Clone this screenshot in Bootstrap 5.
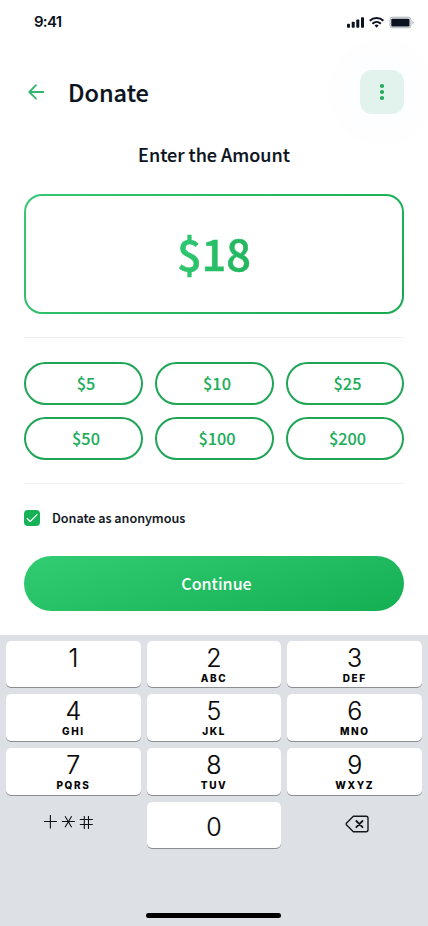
<!DOCTYPE html>
<html lang="en">
<head>
<meta charset="utf-8">
<meta name="viewport" content="width=device-width, initial-scale=1">
<title>Donate</title>
<link href="https://cdn.jsdelivr.net/npm/bootstrap@5.3.0/dist/css/bootstrap.min.css" rel="stylesheet">
<style>
body{font-family:"Noto Sans CJK SC","Noto Sans",sans-serif;color:#0b1220;background:#fff}
.screen{width:428px;height:926px}
.status{height:44px;padding:0 14px 0 34px;font:600 15px/44px Inter,sans-serif;letter-spacing:-.75px}
.topbar{height:44px;margin:26px 24px 0 25px}
.page-title{font-size:23.5px;font-weight:500;line-height:44px;margin-left:20px;-webkit-text-stroke:.2px}
.more{width:44px;height:44px;border-radius:12px;background:#e2f3ed;box-shadow:0 0 50px 12px rgba(90,108,234,.025)}
.prompt{font-size:18px;font-weight:500;line-height:30px;margin-top:25px;-webkit-text-stroke:.15px}
.amount{height:120px;margin-top:25px;border:2px solid transparent;border-radius:18px;background:linear-gradient(#fff,#fff) padding-box,linear-gradient(135deg,#38c774,#15a94f) border-box}
.amount span{font-size:43.4px;font-weight:500;line-height:60px;margin-top:-4px;background:linear-gradient(100deg,#2fc870,#21b45d);-webkit-background-clip:text;background-clip:text;color:transparent;-webkit-text-stroke:.6px transparent}
.rule{height:1px;margin-top:23px;background:#efefef}
.choices,.keys{display:grid;grid-template-columns:repeat(3,1fr)}
.choices{gap:12px;grid-template-columns:119px 119px 118px}
.pill{--bs-btn-color:#20ad5b;--bs-btn-border-color:#20a557;--bs-btn-border-width:2px;--bs-btn-padding-y:0;--bs-btn-padding-x:0;padding-left:5px;height:43px;font-size:16.3px;font-weight:500;line-height:39px;-webkit-text-stroke:.1px}
.tick{width:16px;height:16px;border-radius:4px;background:#15b257}
.anon{font-size:12.6px;font-weight:500;line-height:20px;margin-left:12px;-webkit-text-stroke:.15px}
.continue{height:55px;margin-top:28px;color:#fff;font-size:16.1px;font-weight:500;line-height:53px;padding:0 0 0 5px;border:0;background:linear-gradient(165deg,#32cd73,#14ae53)}
.pad{background:#dde0e5;padding:6px}
.keys{gap:7px 6px;grid-template-rows:46px 47px 47px 46px;font-family:Inter,sans-serif;color:#050505}
.keycap{background:#fff;border-radius:5px;box-shadow:0 1px 0 #8b8d91}
.lettered{padding-top:3px}
.digit{font-size:25px;line-height:28px;font-weight:300;-webkit-text-stroke:.2px}
.letters{font-size:10px;line-height:12px;font-weight:800;letter-spacing:1.6px;margin-right:-.2px}
.home{width:135px;height:5px;margin:auto auto 2px 140px}
svg{display:block}
</style>
<script src="https://cdn.jsdelivr.net/npm/bootstrap@5.3.0/dist/js/bootstrap.bundle.min.js"></script>
</head>
<body>
<div class="screen d-flex flex-column overflow-hidden">
  <div class="status d-flex justify-content-between align-items-center">
    <span>9:41</span>
    <svg width="68" height="14" viewBox="346 15.5 68 14">
      <g fill="#0b1220"><rect x="347" y="24.2" width="3" height="4" rx=".8"/><rect x="351.7" y="22.3" width="3" height="5.9" rx=".8"/><rect x="356.3" y="20" width="3" height="8.2" rx=".8"/><rect x="361" y="17.8" width="3" height="10.4" rx=".8"/><path d="M376.6 28.2l2-2.2a3 3 0 0 0-4 0z"/></g>
      <g fill="none" stroke="#0b1220" stroke-width="2"><path d="M369.8 21.2a9.8 9.8 0 0 1 13.6 0M372.4 24.2a6.2 6.2 0 0 1 8.4 0"/></g>
      <rect x="390" y="17.7" width="21" height="10.6" rx="2.6" fill="#e7e8eb" stroke="#b3b6bb"/><rect x="391.3" y="19.3" width="18.2" height="7.6" rx="1" fill="#0b1220"/><path d="M412.3 21.2v3.8q1.3-.5 1.3-1.9t-1.3-1.9z" fill="#b3b6bb"/>
    </svg>
  </div>
  <header class="topbar d-flex align-items-center flex-shrink-0">
    <svg width="23" height="24" viewBox="25 80 23 24" fill="none" stroke="#32b56e" stroke-width="1.8" stroke-linecap="round" stroke-linejoin="round"><path d="M43.3 92H29.4M36 85.2L29.3 92l6.7 6.6"/></svg>
    <h1 class="page-title mb-0">Donate</h1>
    <div class="more ms-auto d-flex align-items-center justify-content-center">
      <svg width="6" height="18" fill="#20aa5a"><circle cx="3" cy="3" r="2.1"/><circle cx="3" cy="9" r="2.1"/><circle cx="3" cy="15" r="2.1"/></svg>
    </div>
  </header>
  <main class="px-4">
    <h2 class="prompt text-center mb-0">Enter the Amount</h2>
    <div class="amount d-flex align-items-center justify-content-center"><span>$18</span></div>
    <div class="rule"></div>
    <div class="choices mt-4">
      <button class="btn pill rounded-pill">$5</button><button class="btn pill rounded-pill">$10</button><button class="btn pill rounded-pill">$25</button>
      <button class="btn pill rounded-pill">$50</button><button class="btn pill rounded-pill">$100</button><button class="btn pill rounded-pill">$200</button>
    </div>
    <div class="rule"></div>
    <div class="d-flex align-items-center mt-4">
      <span class="tick"><svg width="16" height="16" fill="none" stroke="#fff" stroke-width="1.2" stroke-linecap="round" stroke-linejoin="round"><path d="M3.2 8.5l3 3L13 4.7"/></svg></span>
      <span class="anon">Donate as anonymous</span>
    </div>
    <button class="btn continue rounded-pill w-100 d-block">Continue</button>
  </main>
  <div class="pad mt-4 flex-grow-1 d-flex flex-column">
    <div class="keys">
      <div class="keycap lettered text-center"><div class="digit">1</div></div>
      <div class="keycap lettered text-center"><div class="digit">2</div><div class="letters">ABC</div></div>
      <div class="keycap lettered text-center"><div class="digit">3</div><div class="letters">DEF</div></div>
      <div class="keycap lettered text-center"><div class="digit">4</div><div class="letters">GHI</div></div>
      <div class="keycap lettered text-center"><div class="digit">5</div><div class="letters">JKL</div></div>
      <div class="keycap lettered text-center"><div class="digit">6</div><div class="letters">MNO</div></div>
      <div class="keycap lettered text-center"><div class="digit">7</div><div class="letters">PQRS</div></div>
      <div class="keycap lettered text-center"><div class="digit">8</div><div class="letters">TUV</div></div>
      <div class="keycap lettered text-center"><div class="digit">9</div><div class="letters">WXYZ</div></div>
      <svg class="w-100" height="46" viewBox="6 802 135 46" fill="none" stroke="#101114" stroke-width="1.1"><path d="M44 821.5h13M50.5 815v13.5M62 821.5h13M65.2 816.2l6.6 11M71.8 816.2l-6.6 11M80 819.5h13M80 824.5h13M84.5 816v13M88.7 816v13"/></svg>
      <div class="keycap d-flex align-items-center justify-content-center pt-1"><span class="digit">0</span></div>
      <svg class="w-100" height="46" viewBox="287 802 135 46" fill="none" stroke="#15171c" stroke-width="1.4" stroke-linejoin="round" stroke-linecap="round"><path d="M353.5 816.2h12.7a2 2 0 0 1 2 2v11.5a2 2 0 0 1-2 2h-12.7l-7-7q-.6-.7 0-1.4z"/><path stroke-width="1.8" d="M356.5 821l6.2 6.2M362.7 821l-6.2 6.2"/></svg>
    </div>
    <div class="home bg-black rounded-pill"></div>
  </div>
</div>
</body>
</html>
